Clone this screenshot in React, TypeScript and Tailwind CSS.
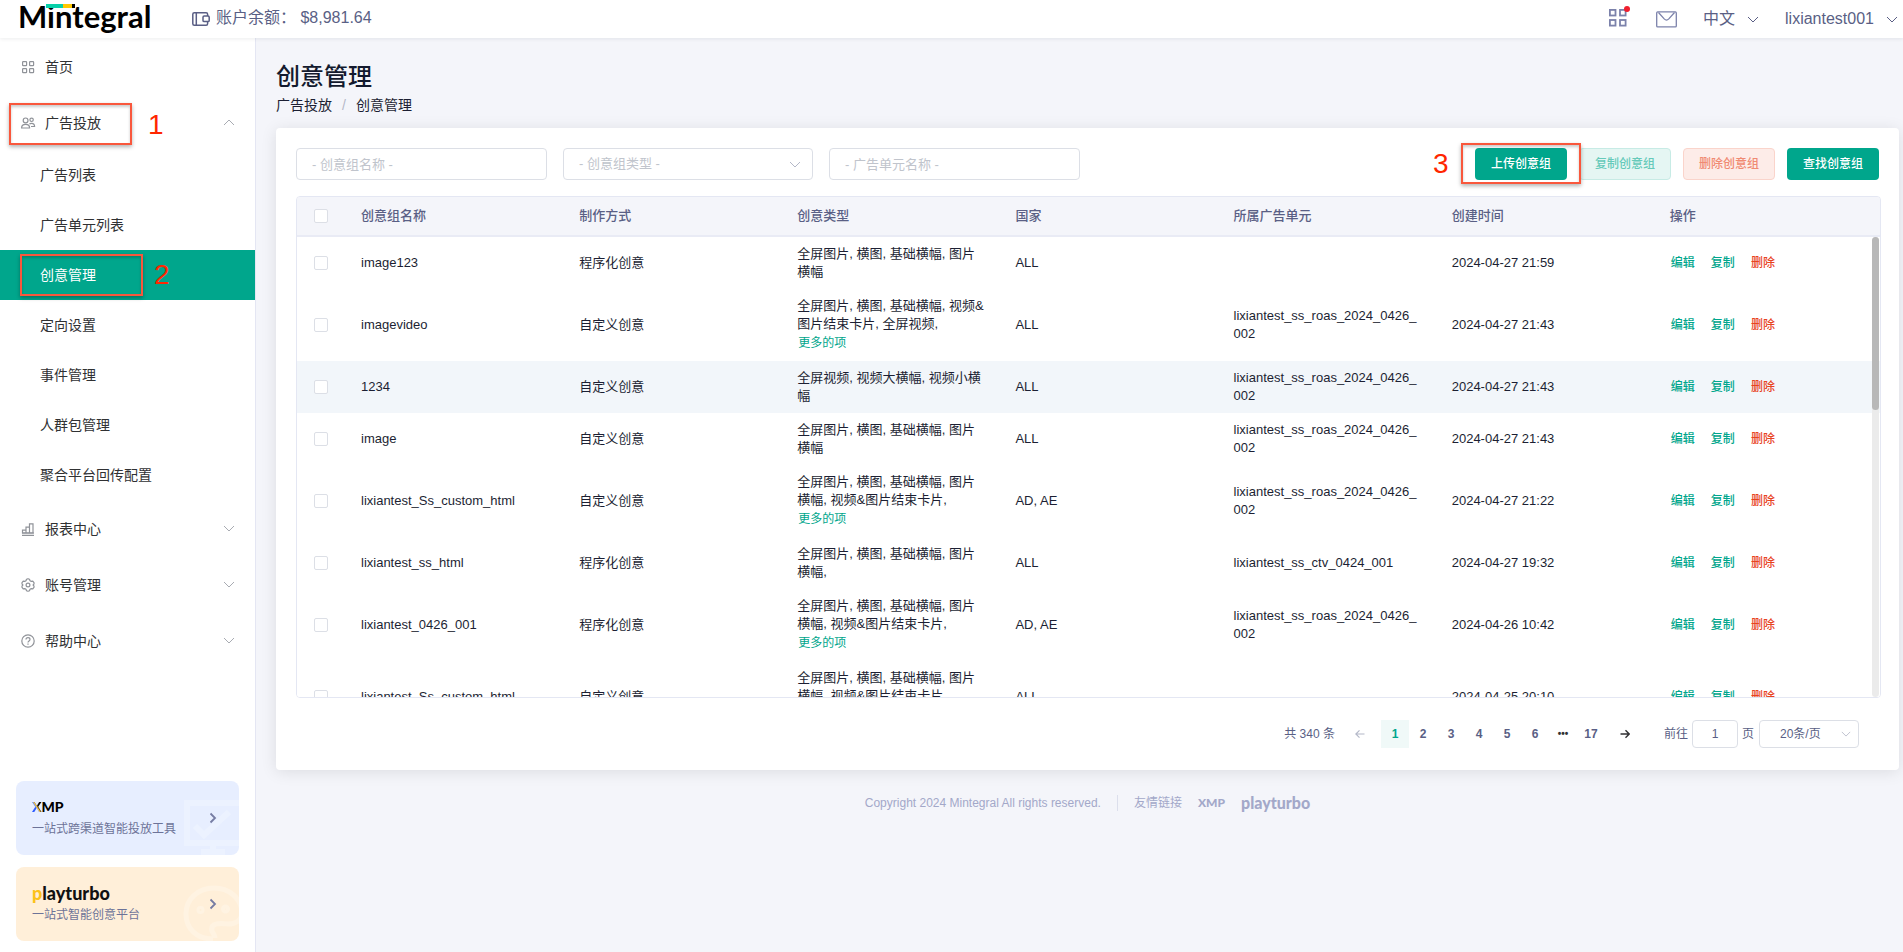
import React from "react";

const chevron = "M1 1l5 5 5-5";

function Chevron({ className = "" }: { className?: string }) {
  return (
    <svg className={className} viewBox="0 0 12 7" fill="none" stroke="currentColor" strokeWidth="1" aria-hidden="true">
      <path d={chevron} />
    </svg>
  );
}

function BoldChevron() {
  return (
    <svg className="relative h-3 w-2 text-[#767ca3]" viewBox="0 0 8 12" fill="none" stroke="currentColor" strokeWidth="1.8" aria-hidden="true">
      <path d="M1.5 1.500L6 6l-4.500 4.500" />
    </svg>
  );
}

function GridIcon() {
  return (
    <svg className="size-4" viewBox="0 0 16 16" fill="none" stroke="currentColor" strokeWidth="1.2" aria-hidden="true">
      <rect x="2.6" y="2.6" width="4" height="4" rx="0.6" />
      <rect x="9.6" y="2.6" width="4" height="4" rx="0.6" />
      <rect x="2.6" y="9.6" width="4" height="4" rx="0.6" />
      <rect x="9.6" y="9.6" width="4" height="4" rx="0.6" />
    </svg>
  );
}

function UsersIcon() {
  return (
    <svg className="size-4" viewBox="0 0 16 16" fill="none" stroke="currentColor" strokeWidth="1.2" aria-hidden="true">
      <circle cx="5.600" cy="5.400" r="2.400" />
      <circle cx="11.600" cy="4.800" r="1.700" />
      <path d="M1.600 13c0-2.400 1.500-3.600 4-3.600s4 1.200 4 3.600z" />
      <path d="M9.400 9c.600-.500 1.300-.700 2.200-.700 1.900 0 3 1.200 3 3.200H11" />
    </svg>
  );
}

function ReportIcon() {
  return (
    <svg className="size-4" viewBox="0 0 16 16" fill="none" stroke="currentColor" strokeWidth="1.2" aria-hidden="true">
      <path d="M2 14.400h12M2.500 12V9.200h3.500V12zM6 12V6.200h3.500V12zM9.500 12V2.800H13V12z" />
      <path d="M2 12h12" />
    </svg>
  );
}

function GearIcon() {
  return (
    <svg className="size-4" viewBox="0 0 16 16" fill="none" stroke="currentColor" strokeWidth="1.2" strokeLinejoin="round" aria-hidden="true">
      <path d="M6.500 2.300 8 1.700l1.500.600.500 1.400 1.300.700 1.500-.200 1.300 1.600-.200 1.300-.800.900.800.900.200 1.300-1.300 1.600-1.500-.200-1.300.700-.500 1.400-1.500.600-1.500-.600-.500-1.400-1.300-.700-1.500.200-1.300-1.600.200-1.300.800-.900-.800-.900-.200-1.300 1.300-1.600 1.500.200 1.300-.700z" />
      <circle cx="8" cy="8" r="1.900" />
    </svg>
  );
}

function HelpIcon() {
  return (
    <svg className="size-4" viewBox="0 0 16 16" fill="none" stroke="currentColor" strokeWidth="1.2" aria-hidden="true">
      <circle cx="8" cy="8" r="6.200" />
      <path d="M6 6.600C6 5.400 6.800 4.700 8 4.700s2 .700 2 1.800c0 1.400-2 1.500-2 3M8 10.600v1.200" />
    </svg>
  );
}

function WalletIcon() {
  return (
    <svg className="h-4 w-[18px]" viewBox="0 0 18 16" fill="none" stroke="currentColor" strokeWidth="1.500" aria-hidden="true">
      <rect x="0.800" y="1.700" width="14.800" height="12.600" rx="1.500" />
      <path d="M4.300 1.700v12.600" />
      <rect x="11" y="5" width="6.200" height="5.600" rx="1.200" fill="white" />
    </svg>
  );
}

function MintegralLogo() {
  return (
    <a href="#" className="relative block pl-[18px] text-[31px] leading-8 font-bold text-black" style={{ fontFamily: "Lato, sans-serif" }}>
      Mintegral
      <svg className="absolute top-1 left-[46px] h-1 w-[29px]" viewBox="0 0 29 4" aria-hidden="true">
        <rect width="17" height="4" fill="#07d0a9" />
        <rect x="17" width="9" height="4" fill="#ffc800" />
        <rect x="26" width="3" height="4" fill="#000" />
      </svg>
    </a>
  );
}

function XmpMark({ muted = false }: { muted?: boolean }) {
  return (
    <span className={muted ? "text-xs leading-4 font-black" : "text-sm leading-4 font-black text-black"} style={{ fontFamily: "Lato, sans-serif" }}>
      {muted ? "X" : <span className="inline-block bg-linear-to-tr from-[#2d5bff] from-40% via-[#ffc020] via-50% to-black to-60% bg-clip-text text-transparent">X</span>}MP
    </span>
  );
}

function PlayturboMark({ muted = false }: { muted?: boolean }) {
  return (
    <span className={muted ? "text-base leading-4 font-black" : "text-lg leading-4 font-black text-[#111]"} style={{ fontFamily: "Lato, sans-serif" }}>
      <span className={muted ? "" : "text-[#fcc21b]"}>p</span>layturbo
    </span>
  );
}

const subItems = ["广告列表", "广告单元列表", "创意管理", "定向设置", "事件管理", "人群包管理", "聚合平台回传配置"];

function Callout({ n, box, num }: { n: number; box: string; num: string }) {
  return (
    <>
      <span className={`pointer-events-none absolute border-2 border-[#f9573c] shadow-[0_2px_4px_rgba(0,0,0,0.3),inset_0_2px_3px_rgba(0,0,0,0.2)] ${box}`} />
      <span className={`pointer-events-none absolute text-[28px] leading-8 text-[#ff2600] ${num}`}>{n}</span>
    </>
  );
}

function MenuRow({ icon, label, open }: { icon: React.ReactNode; label: string; open?: boolean }) {
  return (
    <a href="#" className="flex h-14 items-center pt-px pr-5 pl-5 text-sm text-[#303133]">
      <span className="mr-[9px] text-[#909399]">{icon}</span>
      <span className="flex-1">{label}</span>
      {open !== undefined && <Chevron className={open ? "h-[7px] w-3 rotate-180 text-[#a8abb2]" : "h-[7px] w-3 text-[#a8abb2]"} />}
    </a>
  );
}

function Sidebar() {
  return (
    <aside className="flex w-64 shrink-0 flex-col border-r border-[#e4e6f3] bg-white">
      <nav>
        <MenuRow icon={<GridIcon />} label="首页" />
        <div className="relative">
          <MenuRow icon={<UsersIcon />} label="广告投放" open />
          <Callout n={1} box="left-[9px] top-[9px] h-[42px] w-[123px]" num="left-[148px] top-[15px]" />
        </div>
        <ul>
          {subItems.map((t) => (
            <li key={t} className="relative">
              <a href="#" className={t === "创意管理" ? "flex h-[50px] items-center bg-[#00a68c] pl-10 text-sm text-white" : "flex h-[50px] items-center pl-10 text-sm text-[#303133]"}>
                {t}
              </a>
              {t === "创意管理" && <Callout n={2} box="left-5 top-1 h-[42px] w-[123px]" num="left-[154px] top-[9px]" />}
            </li>
          ))}
        </ul>
        <MenuRow icon={<ReportIcon />} label="报表中心" open={false} />
        <MenuRow icon={<GearIcon />} label="账号管理" open={false} />
        <MenuRow icon={<HelpIcon />} label="帮助中心" open={false} />
      </nav>
      <div className="mt-auto flex flex-col gap-3 px-4 pb-[11px]">
        <a href="#" className="relative flex h-[74px] items-center overflow-hidden rounded-lg bg-[#e7eeff] pr-[22px] pl-4">
          <svg className="absolute right-0 bottom-0 size-14" viewBox="0 0 56 56" fill="none" stroke="#ecf2ff" strokeWidth="6" aria-hidden="true">
            <path d="M60 4H4v40h56M30 44v12M18 53h24" />
            <path d="M12 27l9 9 25-23" />
          </svg>
          <span className="relative flex flex-1 flex-col gap-[6px]">
            <XmpMark />
            <span className="text-xs leading-4 text-[#6d7398]">一站式跨渠道智能投放工具</span>
          </span>
          <BoldChevron />
        </a>
        <a href="#" className="relative flex h-[74px] items-center overflow-hidden rounded-lg bg-[#ffefd9] pr-[22px] pl-4">
          <svg className="absolute right-0 bottom-0 size-14" viewBox="0 0 56 56" fill="none" stroke="#fff3e2" strokeWidth="5" aria-hidden="true">
            <path d="M30 54C14 54 3 44 3 29S15 3 31 3c15 0 27 10 28 24 0 8-6 12-14 12-9-1-18-1-16 7 1 3 3 4 3 7" />
            <circle cx="17.500" cy="25" r="1.500" />
            <circle cx="42.500" cy="24" r="2" />
          </svg>
          <span className="relative flex flex-1 flex-col gap-[6px]">
            <PlayturboMark />
            <span className="text-xs leading-4 text-[#6d7398]">一站式智能创意平台</span>
          </span>
          <BoldChevron />
        </a>
      </div>
    </aside>
  );
}

type Row = { name: string; mode: string; types: string; more?: boolean; country: string; unit: string; time: string; active?: boolean };

const unit2 = "lixiantest_ss_roas_2024_0426_002";
const rows: Row[] = [
  { name: "image123", mode: "程序化创意", types: "全屏图片, 横图, 基础横幅, 图片横幅", country: "ALL", unit: "", time: "2024-04-27 21:59" },
  { name: "imagevideo", mode: "自定义创意", types: "全屏图片, 横图, 基础横幅, 视频&图片结束卡片, 全屏视频,", more: true, country: "ALL", unit: unit2, time: "2024-04-27 21:43" },
  { name: "1234", mode: "自定义创意", types: "全屏视频, 视频大横幅, 视频小横幅", country: "ALL", unit: unit2, time: "2024-04-27 21:43", active: true },
  { name: "image", mode: "自定义创意", types: "全屏图片, 横图, 基础横幅, 图片横幅", country: "ALL", unit: unit2, time: "2024-04-27 21:43" },
  { name: "lixiantest_Ss_custom_html", mode: "自定义创意", types: "全屏图片, 横图, 基础横幅, 图片横幅, 视频&图片结束卡片,", more: true, country: "AD, AE", unit: unit2, time: "2024-04-27 21:22" },
  { name: "lixiantest_ss_html", mode: "程序化创意", types: "全屏图片, 横图, 基础横幅, 图片横幅,", country: "ALL", unit: "lixiantest_ss_ctv_0424_001", time: "2024-04-27 19:32" },
  { name: "lixiantest_0426_001", mode: "程序化创意", types: "全屏图片, 横图, 基础横幅, 图片横幅, 视频&图片结束卡片,", more: true, country: "AD, AE", unit: unit2, time: "2024-04-26 10:42" },
  { name: "lixiantest_Ss_custom_html", mode: "自定义创意", types: "全屏图片, 横图, 基础横幅, 图片横幅, 视频&图片结束卡片,", more: true, country: "ALL", unit: "", time: "2024-04-25 20:10" },
];

const headers = ["创意组名称", "制作方式", "创意类型", "国家", "所属广告单元", "创建时间", "操作"];

const cell = "py-2 pr-[14px] pl-4";

function Tick({ label }: { label: string }) {
  return <input type="checkbox" aria-label={label} className="ml-[17px] block size-[14px] appearance-none rounded-xs border border-[#dcdfe6] bg-white checked:bg-[#00a68c]" />;
}

function CreativeTable() {
  return (
    <div className="relative mt-4 h-[502px] overflow-hidden rounded border border-[#e4e7f3]">
      <div className="h-full overflow-y-auto [scrollbar-width:none]">
        <table className="w-full table-fixed border-separate border-spacing-0 text-[13px] leading-[18px] text-[#1c1f33]">
          <colgroup>
            <col className="w-12" />
            {headers.map((h) => (
              <col key={h} />
            ))}
            <col className="w-2" />
          </colgroup>
          <thead className="sticky top-0 z-10">
            <tr className="h-10 text-left text-[#5a5f85]">
              <th className="border-b-2 border-[#e9ebf5] bg-[#f4f5fa] p-0">
                <Tick label="全选" />
              </th>
              {headers.map((h, i) => (
                <th key={h} colSpan={i === 6 ? 2 : 1} className="border-b-2 border-[#e9ebf5] bg-[#f4f5fa] py-0 pr-[14px] pl-4 font-medium">
                  {h}
                </th>
              ))}
            </tr>
          </thead>
          <tbody>
            {rows.map((r, i) => (
              <tr key={i} className={r.active ? "bg-[#f2f6fa]" : "bg-white"}>
                <td className="p-0">
                  <Tick label={r.name} />
                </td>
                <td className={cell}>{r.name}</td>
                <td className={cell}>{r.mode}</td>
                <td className={`${cell} break-all`}>
                  {r.types}
                  {r.more && (
                    <button type="button" className="block pl-px text-xs leading-5 text-[#00a68c]">
                      更多的项
                    </button>
                  )}
                </td>
                <td className={cell}>{r.country}</td>
                <td className={`${cell} break-all`}>{r.unit}</td>
                <td className={cell}>{r.time}</td>
                <td colSpan={2} className={cell}>
                  <div className="flex gap-4 pl-px text-xs font-medium text-[#00a68c]">
                    <button type="button">编辑</button>
                    <button type="button">复制</button>
                    <button type="button" className="text-[#e8431f]">删除</button>
                  </div>
                </td>
              </tr>
            ))}
          </tbody>
        </table>
      </div>
      <div className="absolute top-10 right-px bottom-0 w-[7px] rounded-full bg-[#ebebeb]">
        <div className="h-[173px] rounded-full bg-[#b8b8b8]" />
      </div>
    </div>
  );
}

function Pagination() {
  return (
    <div className="mt-[22px] flex items-center justify-end pr-[22px] text-xs text-[#5a5f85]">
      <span>共 340 条</span>
      <button type="button" aria-label="上一页" className="mr-[7px] ml-[11px] flex h-7 w-7 items-center justify-center text-[#b4b8c8]">
        <svg className="size-[10px]" viewBox="0 0 10 10" fill="none" stroke="currentColor" strokeWidth="1.200" aria-hidden="true">
          <path d="M9.500 5H1M4.500 1.300L.800 5l3.700 3.700" />
        </svg>
      </button>
      {["1", "2", "3", "4", "5", "6", "•••", "17"].map((p) => (
        <button
          key={p}
          type="button"
          className={
            p === "1"
              ? "h-7 w-7 bg-[#f0f9f8] font-bold text-[#00a68c]"
              : p === "•••"
                ? "h-7 w-7 text-[10px] font-bold text-[#303133]"
                : "h-7 w-7 font-bold"
          }
        >
          {p}
        </button>
      ))}
      <button type="button" aria-label="下一页" className="ml-[6px] flex h-7 w-7 items-center justify-center text-[#303133]">
        <svg className="size-[10px]" viewBox="0 0 10 10" fill="none" stroke="currentColor" strokeWidth="1.400" aria-hidden="true">
          <path d="M.500 5H9M5.500 1.300L9.200 5 5.500 8.700" />
        </svg>
      </button>
      <label className="ml-[25px] flex items-center gap-1">
        前往
        <input defaultValue="1" className="h-7 w-[46px] rounded border border-[#dcdfe6] text-center" />
        页
      </label>
      <span className="relative ml-[5px]">
        <select aria-label="每页条数" className="h-7 w-[100px] appearance-none rounded border border-[#dcdfe6] bg-white pl-5 text-[#5a5f85]">
          <option>20条/页</option>
        </select>
        <Chevron className="pointer-events-none absolute top-[11px] right-2 h-[6px] w-[10px] text-[#b4b8c8]" />
      </span>
    </div>
  );
}

export default function App() {
  return (
    <div className="flex min-h-screen flex-col bg-[#f4f5fa] font-['Liberation_Sans','Noto_Sans_CJK_SC',sans-serif]">
      <header className="relative z-10 flex h-[38px] shrink-0 items-center bg-white pr-[5px] text-base text-[#5a5f85] shadow-[0_1px_4px_rgba(0,21,41,0.08)]">
        <div className="w-48 shrink-0 self-start">
          <MintegralLogo />
        </div>
        <WalletIcon />
        <span className="-mt-[2px] ml-[6px]">账户余额： $8,981.64</span>
        <div className="ml-auto flex items-center">
          <button type="button" aria-label="应用" className="relative -mt-[2px] text-[#7c82ab]">
            <svg className="size-[18px]" viewBox="0 0 18 18" fill="none" stroke="currentColor" strokeWidth="1.800" aria-hidden="true">
              <rect x="0.900" y="0.900" width="5.600" height="5.600" />
              <rect x="11" y="0.900" width="5.600" height="5.600" />
              <rect x="0.900" y="11" width="5.600" height="5.600" />
              <rect x="11" y="11" width="5.600" height="5.600" />
            </svg>
            <span className="absolute -top-[3px] -right-[3px] size-[6px] rounded-full bg-[#f01f2e]" />
          </button>
          <button type="button" aria-label="消息" className="ml-[29px] text-[#7c82ab]">
            <svg className="h-[17px] w-[21px]" viewBox="0 0 21 17" fill="none" stroke="currentColor" strokeWidth="1.300" aria-hidden="true">
              <rect x="0.700" y="0.900" width="19.600" height="15" rx="1" />
              <path d="M2.500 1.500l5.700 6.400q2.300 2.300 4.600 0l5.700-6.400" />
            </svg>
          </button>
          <button type="button" className="ml-[26px] flex items-center gap-3">
            中文
            <Chevron className="h-[7px] w-3" />
          </button>
          <button type="button" className="ml-[26px] flex items-center gap-3">
            lixiantest001
            <Chevron className="h-[7px] w-3" />
          </button>
        </div>
      </header>
      <div className="flex flex-1">
        <Sidebar />
        <main className="flex min-w-0 flex-1 flex-col pt-[21px] pr-1 pl-5">
          <h1 className="text-2xl leading-9 font-medium text-[#131a2e]">创意管理</h1>
          <nav className="flex gap-[10px] text-sm leading-5 text-[#1c1f33]">
            <a href="#">广告投放</a>
            <span className="text-[#b4b8c8]">/</span>
            <span>创意管理</span>
          </nav>
          <section className="mt-[13px] rounded bg-white pt-5 pr-[18px] pb-[22px] pl-5 shadow-[0_2px_16px_rgba(0,0,0,0.1)]">
            <div className="flex gap-4 pr-[2px]">
              <input aria-label="创意组名称" placeholder="- 创意组名称 -" className="h-8 w-[251px] rounded border border-[#dcdfe6] px-[15px] text-[13px] placeholder:text-[#c0c4cc]" />
              <span className="relative">
                <select aria-label="创意组类型" className="h-8 w-[250px] appearance-none rounded border border-[#dcdfe6] bg-white px-[15px] text-[13px] text-[#c0c4cc]">
                  <option>- 创意组类型 -</option>
                </select>
                <Chevron className="pointer-events-none absolute top-[13px] right-3 h-[7px] w-3 text-[#b4b8c8]" />
              </span>
              <input aria-label="广告单元名称" placeholder="- 广告单元名称 -" className="h-8 w-[251px] rounded border border-[#dcdfe6] px-[15px] text-[13px] placeholder:text-[#c0c4cc]" />
              <div className="relative ml-auto flex gap-3 text-xs font-medium">
                <button type="button" className="h-8 w-[92px] rounded bg-[#00a68c] text-white">上传创意组</button>
                <button type="button" className="h-8 w-[92px] rounded border border-[#c7ebe5] bg-[#e5f6f3] text-[#66caba]">复制创意组</button>
                <button type="button" className="h-8 w-[92px] rounded border border-[#fad4cb] bg-[#fdece8] text-[#f08a72]">删除创意组</button>
                <button type="button" className="h-8 w-[92px] rounded bg-[#00a68c] text-white">查找创意组</button>
                <Callout n={3} box="-left-[14px] -top-[5px] h-[41px] w-[120px]" num="-left-[42px] top-0 font-normal" />
              </div>
            </div>
            <CreativeTable />
            <Pagination />
          </section>
          <footer className="mt-6 flex items-center justify-center gap-4 text-xs leading-[18px] text-[#a3a8c9]">
            <span>Copyright 2024 Mintegral All rights reserved.</span>
            <span className="h-4 w-px bg-[#dcdfec]" />
            <span>友情链接</span>
            <a href="#" className="flex">
              <XmpMark muted />
            </a>
            <a href="#" className="flex">
              <PlayturboMark muted />
            </a>
          </footer>
        </main>
      </div>
    </div>
  );
}
